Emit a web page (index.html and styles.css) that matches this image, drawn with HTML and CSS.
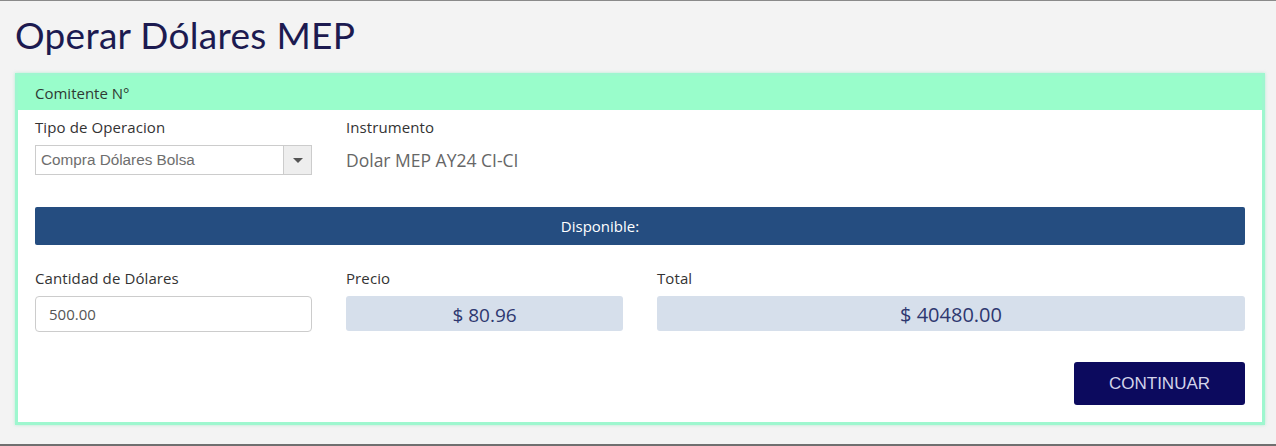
FILE: index.html
```html
<!DOCTYPE html>
<html lang="es">
<head>
    <meta charset="UTF-8">
    <meta name="viewport" content="width=device-width, initial-scale=1.0">
    <title>Operar Dólares MEP</title>
    <link rel="stylesheet" href="styles.css">
</head>
<body>

<div class="page">
    <h1 class="title">Operar Dólares MEP</h1>

    <div class="panel">
        <div class="panel-heading">Comitente N°</div>

        <div class="panel-body">
            <div class="form-row">
                <div class="field">
                    <label class="field-label">Tipo de Operacion</label>
                    <div class="select">
                        <span class="select-value">Compra Dólares Bolsa</span>
                        <span class="select-arrow"><span class="caret"></span></span>
                    </div>
                </div>
                <div class="field">
                    <label class="field-label">Instrumento</label>
                    <div class="static-value">Dolar MEP AY24 CI-CI</div>
                </div>
            </div>

            <div class="available">Disponible: <span class="available-value"></span></div>

            <div class="form-row">
                <div class="field">
                    <label class="field-label">Cantidad de Dólares</label>
                    <input class="input" type="text" value="500.00">
                </div>
                <div class="field">
                    <label class="field-label">Precio</label>
                    <div class="amount">$ 80.96</div>
                </div>
                <div class="field field-wide">
                    <label class="field-label">Total</label>
                    <div class="amount amount-total">$ 40480.00</div>
                </div>
            </div>

            <div class="actions">
                <button class="btn-continue">CONTINUAR</button>
            </div>
        </div>
    </div>
</div>

</body>
</html>
```

FILE: styles.css
```css
html, body {
    margin: 0;
    padding: 0;
}

body {
    font-family: 'Open Sans', sans-serif;
    background-color: #f3f3f3;
    color: #333;
    height: 446px;
    box-sizing: border-box;
    border-top: 1px solid #8a8a8a;
    border-bottom: 2px solid #6f6f6f;
}

.page {
    padding: 0 11px 0 15px;
}

.title {
    font-family: 'Lato', sans-serif;
    font-weight: 400;
    font-size: 37px;
    color: #1c1a50;
    margin: 0;
    padding-top: 12px;
    height: 60px;
    line-height: 44px;
    letter-spacing: 0.3px;
}

.panel {
    border: 3px solid #9ef7cf;
    background-color: #fff;
    box-shadow: 0 0 3px rgba(120, 230, 180, 0.5);
}

.panel-heading {
    background-color: #99fdcb;
    height: 34px;
    line-height: 35px;
    padding-left: 17px;
    font-size: 15px;
    color: #2f3a33;
}

.panel-body {
    padding: 6px 17px 17px 17px;
}

.form-row {
    display: grid;
    grid-template-columns: 277px 277px 588px;
    column-gap: 34px;
}

.field-label {
    display: block;
    font-size: 15px;
    color: #333;
    height: 22px;
    line-height: 22px;
    margin-bottom: 7px;
    letter-spacing: 0.1px;
}

.select {
    display: flex;
    height: 30px;
    border: 1px solid #ccc;
    box-sizing: border-box;
    font-family: 'Liberation Sans', Arial, sans-serif;
}

.select-value {
    flex: 1;
    padding-left: 5px;
    line-height: 28px;
    font-size: 15.3px;
    color: #6e6e6e;
}

.select-arrow {
    width: 27px;
    background-color: #eee;
    border-left: 1px solid #ccc;
    display: flex;
    align-items: center;
    justify-content: center;
}

.caret {
    width: 0;
    height: 0;
    border-left: 5px solid transparent;
    border-right: 5px solid transparent;
    border-top: 5px solid #555;
}

.static-value {
    font-size: 17.5px;
    color: #666;
    line-height: 30px;
}

.available {
    margin-top: 32px;
    background-color: #254d80;
    color: #fff;
    height: 38px;
    line-height: 38px;
    text-align: center;
    font-size: 15px;
    border-radius: 2px;
    margin-bottom: 22px;
    padding-right: 80px;
}

.input {
    display: block;
    width: 100%;
    height: 36px;
    box-sizing: border-box;
    border: 1px solid #ccc;
    border-radius: 4px;
    padding: 0 13px;
    font-family: 'Open Sans', sans-serif;
    font-size: 15px;
    color: #555;
}

.amount {
    height: 35px;
    line-height: 38px;
    background-color: #d6dfeb;
    border-radius: 3px;
    text-align: center;
    font-size: 19px;
    color: #2e3870;
}

.amount-total {
    font-size: 20px;
}

.actions {
    display: flex;
    justify-content: flex-end;
    margin-top: 30px;
}

.btn-continue {
    background-color: #0c0a5e;
    color: #d3d3ea;
    border: none;
    border-radius: 3px;
    width: 171px;
    height: 43px;
    font-family: 'Liberation Sans', Arial, sans-serif;
    font-size: 17px;
    cursor: pointer;
}
```
